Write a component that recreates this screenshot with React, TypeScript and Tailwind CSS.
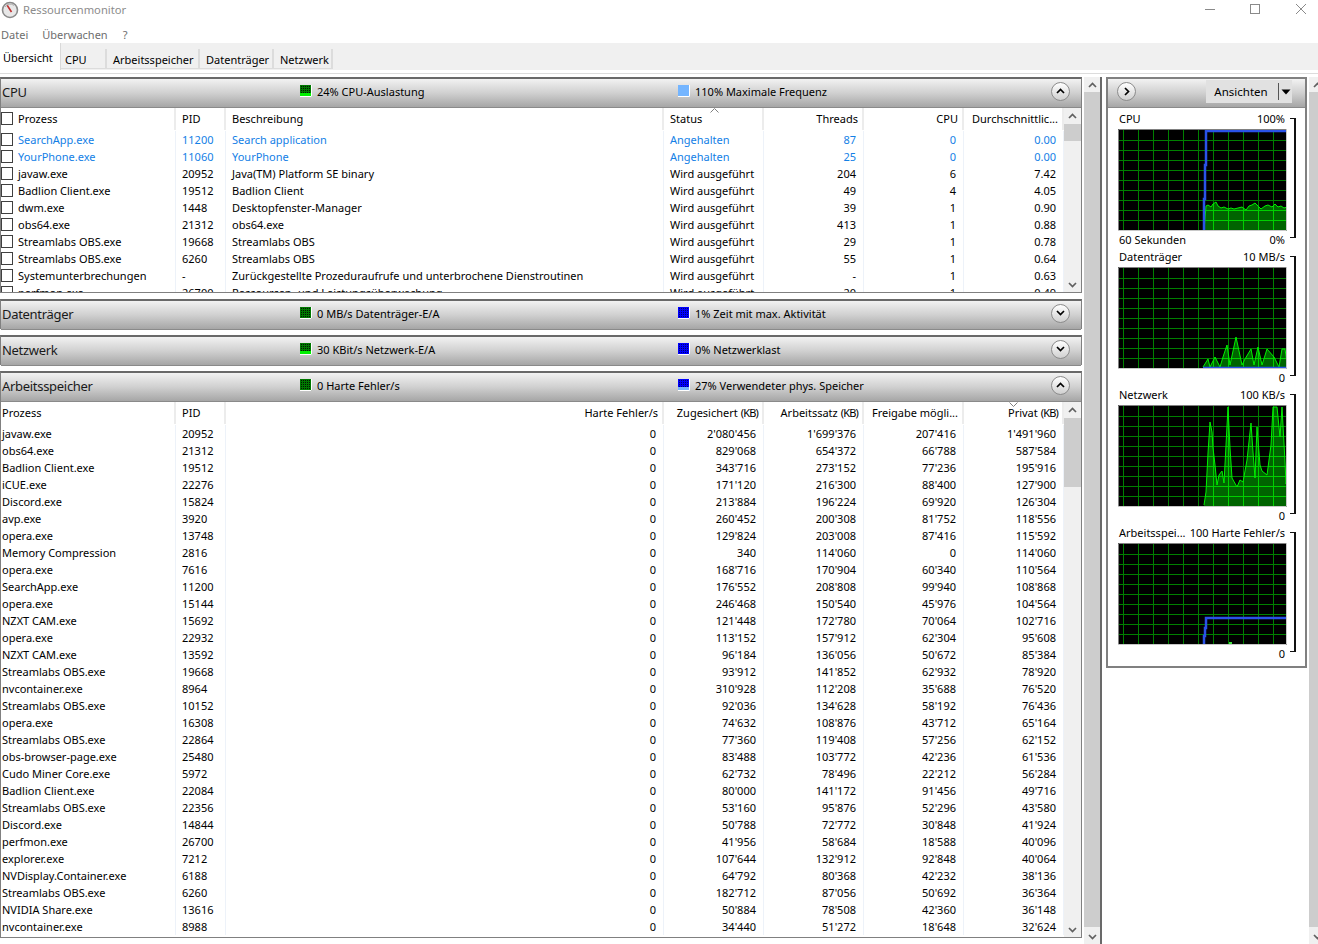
import { ReactNode } from "react";

type CpuRow = [string, string, string, string, string, string, string];

const cpuRows: CpuRow[] = [
  ["SearchApp.exe", "11200", "Search application", "Angehalten", "87", "0", "0.00"],
  ["YourPhone.exe", "11060", "YourPhone", "Angehalten", "25", "0", "0.00"],
  ["javaw.exe", "20952", "Java(TM) Platform SE binary", "Wird ausgeführt", "204", "6", "7.42"],
  ["Badlion Client.exe", "19512", "Badlion Client", "Wird ausgeführt", "49", "4", "4.05"],
  ["dwm.exe", "1448", "Desktopfenster-Manager", "Wird ausgeführt", "39", "1", "0.90"],
  ["obs64.exe", "21312", "obs64.exe", "Wird ausgeführt", "413", "1", "0.88"],
  ["Streamlabs OBS.exe", "19668", "Streamlabs OBS", "Wird ausgeführt", "29", "1", "0.78"],
  ["Streamlabs OBS.exe", "6260", "Streamlabs OBS", "Wird ausgeführt", "55", "1", "0.64"],
  ["Systemunterbrechungen", "-", "Zurückgestellte Prozeduraufrufe und unterbrochene Dienstroutinen", "Wird ausgeführt", "-", "1", "0.63"],
  ["perfmon.exe", "26700", "Ressourcen- und Leistungsüberwachung", "Wird ausgeführt", "20", "1", "0.49"],
];

const memRows: string[][] = [
  ["javaw.exe", "20952", "0", "2'080'456", "1'699'376", "207'416", "1'491'960"],
  ["obs64.exe", "21312", "0", "829'068", "654'372", "66'788", "587'584"],
  ["Badlion Client.exe", "19512", "0", "343'716", "273'152", "77'236", "195'916"],
  ["iCUE.exe", "22276", "0", "171'120", "216'300", "88'400", "127'900"],
  ["Discord.exe", "15824", "0", "213'884", "196'224", "69'920", "126'304"],
  ["avp.exe", "3920", "0", "260'452", "200'308", "81'752", "118'556"],
  ["opera.exe", "13748", "0", "129'824", "203'008", "87'416", "115'592"],
  ["Memory Compression", "2816", "0", "340", "114'060", "0", "114'060"],
  ["opera.exe", "7616", "0", "168'716", "170'904", "60'340", "110'564"],
  ["SearchApp.exe", "11200", "0", "176'552", "208'808", "99'940", "108'868"],
  ["opera.exe", "15144", "0", "246'468", "150'540", "45'976", "104'564"],
  ["NZXT CAM.exe", "15692", "0", "121'448", "172'780", "70'064", "102'716"],
  ["opera.exe", "22932", "0", "113'152", "157'912", "62'304", "95'608"],
  ["NZXT CAM.exe", "13592", "0", "96'184", "136'056", "50'672", "85'384"],
  ["Streamlabs OBS.exe", "19668", "0", "93'912", "141'852", "62'932", "78'920"],
  ["nvcontainer.exe", "8964", "0", "310'928", "112'208", "35'688", "76'520"],
  ["Streamlabs OBS.exe", "10152", "0", "92'036", "134'628", "58'192", "76'436"],
  ["opera.exe", "16308", "0", "74'632", "108'876", "43'712", "65'164"],
  ["Streamlabs OBS.exe", "22864", "0", "77'360", "119'408", "57'256", "62'152"],
  ["obs-browser-page.exe", "25480", "0", "83'488", "103'772", "42'236", "61'536"],
  ["Cudo Miner Core.exe", "5972", "0", "62'732", "78'496", "22'212", "56'284"],
  ["Badlion Client.exe", "22084", "0", "80'000", "141'172", "91'456", "49'716"],
  ["Streamlabs OBS.exe", "22356", "0", "53'160", "95'876", "52'296", "43'580"],
  ["Discord.exe", "14844", "0", "50'788", "72'772", "30'848", "41'924"],
  ["perfmon.exe", "26700", "0", "41'956", "58'684", "18'588", "40'096"],
  ["explorer.exe", "7212", "0", "107'644", "132'912", "92'848", "40'064"],
  ["NVDisplay.Container.exe", "6188", "0", "64'792", "80'368", "42'232", "38'136"],
  ["Streamlabs OBS.exe", "6260", "0", "182'712", "87'056", "50'692", "36'364"],
  ["NVIDIA Share.exe", "13616", "0", "50'884", "78'508", "42'360", "36'148"],
  ["nvcontainer.exe", "8988", "0", "34'440", "51'272", "18'648", "32'624"],
];

const cols = "grid grid-cols-[175px_50px_438px_100px_100px_100px_100px]";

function Chevron({ up, className }: { up: boolean; className?: string }) {
  return (
    <svg width="9" height="6" viewBox="0 0 9 6" className={className}>
      <path
        d={up ? "M1 5 L4.5 1.5 L8 5" : "M1 1 L4.5 4.5 L8 1"}
        fill="none"
        stroke="currentColor"
        strokeWidth="1.7"
      />
    </svg>
  );
}

function RoundBtn({ dir }: { dir: "up" | "down" | "right" }) {
  return (
    <div className="w-[19px] h-[19px] rounded-full border border-[#8c8c8c] bg-gradient-to-b from-[#ffffff] to-[#d0d0d0] flex items-center justify-center text-black">
      {dir === "right" ? (
        <svg width="6" height="9" viewBox="0 0 6 9">
          <path d="M1 1 L4.5 4.5 L1 8" fill="none" stroke="currentColor" strokeWidth="1.7" />
        </svg>
      ) : (
        <Chevron up={dir === "up"} />
      )}
    </div>
  );
}

function Scrollbar({ width, thumbTop, thumbH }: { width: string; thumbTop: string; thumbH: string }) {
  return (
    <div className={`${width} shrink-0 bg-[#f0f0f0] flex flex-col items-center text-[#606060]`}>
      <div className="h-[15px] flex items-center justify-center">
        <Chevron up />
      </div>
      <div className={`${thumbTop} ${thumbH} w-full bg-[#cdcdcd]`} />
      <div className="flex-1" />
      <div className="h-[15px] flex items-center justify-center">
        <Chevron up={false} />
      </div>
    </div>
  );
}

function Indicator({ base, dot, fillColor, fill }: { base: string; dot: string; fillColor: string; fill: number }) {
  const dots: ReactNode[] = [];
  for (let y = 1; y < 12; y += 2)
    for (let x = 1; x < 12; x += 2)
      dots.push(<rect key={`${x}-${y}`} x={x} y={y} width="1" height="1" fill={dot} />);
  return (
    <svg width="12" height="12" viewBox="0 0 12 12" className="shrink-0">
      <rect width="12" height="12" fill={base} />
      {dots}
      {fill > 0 && <rect x="0" y={12 - fill} width="12" height={fill} fill={fillColor} />}
      <path d="M0 11.5 H11.5 V0" fill="none" stroke="#ffffff" />
    </svg>
  );
}

const GreenInd = ({ fill }: { fill: number }) => <Indicator base="#007800" dot="#001800" fillColor="#00f000" fill={fill} />;
const BlueInd = ({ fill }: { fill: number }) => <Indicator base="#0000ff" dot="#000070" fillColor="#74b5ff" fill={fill} />;

function SectionHeader({
  title,
  left,
  right,
  open,
}: {
  title: string;
  left: [ReactNode, string];
  right: [ReactNode, string];
  open: boolean;
}) {
  return (
    <div className="h-[29px] shrink-0 flex items-center pb-[4px] bg-gradient-to-b from-[#f2f2f2] via-[#d0d0d0] to-[#a6a6a6] border-b border-[#8a8a8a]">
      <div className="w-[299px] pl-[1px] pt-[2px] text-[13px] text-[#1a1a1a] tracking-[-0.3px]">{title}</div>
      <div className="w-[378px] flex items-center gap-[5px]">
        {left[0]}
        <span>{left[1]}</span>
      </div>
      <div className="flex-1 flex items-center gap-[5px]">
        {right[0]}
        <span>{right[1]}</span>
      </div>
      <div className="mr-[11px]">
        <RoundBtn dir={open ? "up" : "down"} />
      </div>
    </div>
  );
}

function HeadCell({ children, right }: { children: ReactNode; right?: boolean }) {
  return (
    <div
      className={`h-full flex items-center pb-[1px] whitespace-nowrap overflow-hidden border-r-2 border-[#ececec] ${
        right ? "justify-end pr-[4px]" : "pl-[6px]"
      }`}
    >
      {children}
    </div>
  );
}

function Cell({ children, right }: { children: ReactNode; right?: boolean }) {
  return (
    <div
      className={`h-[17px] flex items-center px-[6px] whitespace-nowrap overflow-hidden border-r border-[#edf2f9] ${
        right ? "justify-end pr-[7px]" : ""
      }`}
    >
      {children}
    </div>
  );
}

function Box() {
  return <div className="w-[12px] h-[13px] border border-[#404040] bg-white shrink-0" />;
}

function Kb({ name }: { name: string }) {
  return (
    <span>
      {name} <span className="tracking-[-0.8px]">(KB)</span>
    </span>
  );
}

function CpuTable() {
  return (
    <div className="h-[184px] flex overflow-hidden bg-white">
      <div className="flex-1 overflow-hidden">
        <div className={`${cols} h-[22px] relative`}>
          <HeadCell>
            <div className="flex items-center gap-[5px] -ml-[6px]">
              <Box />
              Prozess
            </div>
          </HeadCell>
          <HeadCell>PID</HeadCell>
          <HeadCell>Beschreibung</HeadCell>
          <HeadCell>Status</HeadCell>
          <HeadCell right>Threads</HeadCell>
          <HeadCell right>CPU</HeadCell>
          <HeadCell right>Durchschnittlic...</HeadCell>
          <svg width="9" height="5" viewBox="0 0 9 5" className="absolute left-[709px] top-[0px] text-[#808080]">
            <path d="M0.5 4.5 L4.5 0.5 L8.5 4.5" fill="none" stroke="currentColor" />
          </svg>
        </div>
        <div className="pt-[1px]">
          {cpuRows.map((r, i) => (
            <div key={i} className={`${cols} ${i < 2 ? "text-[#1380e6]" : "text-black"}`}>
              <Cell>
                <div className="flex items-center gap-[5px] -ml-[6px]">
                  <Box />
                  {r[0]}
                </div>
              </Cell>
              <Cell>{r[1]}</Cell>
              <Cell>{r[2]}</Cell>
              <Cell>{r[3]}</Cell>
              <Cell right>{r[4]}</Cell>
              <Cell right>{r[5]}</Cell>
              <Cell right>{r[6]}</Cell>
            </div>
          ))}
        </div>
      </div>
      <Scrollbar width="w-[17px]" thumbTop="mt-[1px]" thumbH="h-[17px]" />
    </div>
  );
}

function MemTable() {
  return (
    <div className="flex-1 min-h-0 flex overflow-hidden bg-white">
      <div className="flex-1 overflow-hidden">
        <div className={`${cols} h-[22px] relative`}>
          <HeadCell>
            <span className="-ml-[5px]">Prozess</span>
          </HeadCell>
          <HeadCell>PID</HeadCell>
          <HeadCell right>Harte Fehler/s</HeadCell>
          <HeadCell right>
            <Kb name="Zugesichert" />
          </HeadCell>
          <HeadCell right>
            <Kb name="Arbeitssatz" />
          </HeadCell>
          <HeadCell right>Freigabe mögli...</HeadCell>
          <HeadCell right>
            <Kb name="Privat" />
          </HeadCell>
          <svg width="9" height="5" viewBox="0 0 9 5" className="absolute left-[1008px] top-[0px] text-[#808080]">
            <path d="M0.5 0.5 L4.5 4.5 L8.5 0.5" fill="none" stroke="currentColor" />
          </svg>
        </div>
        <div className="pt-[1px]">
          {memRows.map((r, i) => (
            <div key={i} className={`${cols} text-black`}>
              <Cell>
                <span className="-ml-[5px]">{r[0]}</span>
              </Cell>
              <Cell>{r[1]}</Cell>
              <Cell right>{r[2]}</Cell>
              <Cell right>{r[3]}</Cell>
              <Cell right>{r[4]}</Cell>
              <Cell right>{r[5]}</Cell>
              <Cell right>{r[6]}</Cell>
            </div>
          ))}
        </div>
      </div>
      <Scrollbar width="w-[17px]" thumbTop="mt-[1px]" thumbH="h-[69px]" />
    </div>
  );
}

// graph coordinates are 169x102, same as the box on screen
function Graph({ line, blue, id, dot }: { line?: [number, number][]; blue?: string; id: string; dot?: boolean }) {
  const vs = Array.from({ length: 12 }, (_, i) => 5 + i * 15);
  const hs = Array.from({ length: 9 }, (_, i) => 11 + i * 10);
  const pts = line ? line.map((p) => p.join(",")).join(" ") : "";
  const area = line ? `${line[0][0]},102 ${pts} ${line[line.length - 1][0]},102` : "";
  const gridLines = (stroke: string) => (
    <>
      {vs.map((x) => (
        <line key={`v${x}`} x1={x + 0.5} x2={x + 0.5} y1="0" y2="102" stroke={stroke} />
      ))}
      {hs.map((y) => (
        <line key={`h${y}`} y1={y + 0.5} y2={y + 0.5} x1="0" x2="169" stroke={stroke} />
      ))}
    </>
  );
  return (
    <svg width="169" height="102" viewBox="0 0 169 102" className="block shrink-0">
      <rect width="169" height="102" fill="#000" />
      {gridLines("#008000")}
      {line && (
        <>
          <clipPath id={id}>
            <polygon points={area} />
          </clipPath>
          <polygon points={area} fill="#006400" />
          <g clipPath={`url(#${id})`}>{gridLines("#00d000")}</g>
          <polyline points={pts} fill="none" stroke="#00f000" strokeWidth="1" />
        </>
      )}
      {dot && <rect x="111" y="99" width="3" height="2" fill="#40e040" />}
      {blue && <polyline points={blue} fill="none" stroke="#2a52e8" strokeWidth="2.5" />}
      <path d="M0.5 102 V0.5 H169" fill="none" stroke="#808080" />
      <path d="M0 101.5 H168.5 V0" fill="none" stroke="#c8c8c8" />
    </svg>
  );
}

const cpuLine: [number, number][] = [
  [86, 102], [88, 77], [90, 76], [93, 78], [95, 75], [98, 73], [100, 77], [103, 79], [106, 78], [110, 80], [113, 79],
  [116, 80], [120, 79], [124, 78], [128, 81], [131, 77], [134, 76], [137, 74], [140, 77], [143, 80], [147, 77], [150, 76],
  [154, 78], [157, 75], [160, 78], [163, 77], [166, 79], [169, 78],
];
const diskLine: [number, number][] = [
  [85, 100], [90, 92], [92, 100], [97, 90], [102, 100], [105, 90], [109, 78], [112, 98], [118, 70], [124, 98], [127, 92],
  [133, 82], [136, 98], [140, 80], [144, 98], [149, 82], [156, 90], [161, 100], [164, 82], [167, 82], [169, 96],
];
const netLine: [number, number][] = [
  [86, 100], [88, 87], [90, 48], [92, 17], [94, 27], [95, 43], [97, 60], [99, 80], [101, 70], [104, 66], [106, 78], [108, 40],
  [110, 2], [112, 43], [114, 73], [119, 82], [122, 75], [125, 77], [129, 55], [133, 18], [135, 47], [137, 73], [139, 22],
  [142, 60], [144, 66], [149, 70], [153, 40], [155, 2], [159, 2], [162, 32], [164, 2], [167, 57], [168, 79], [169, 73],
];

function GraphBlock({
  label,
  top,
  foot,
  footRight,
  children,
}: {
  label: string;
  top: string;
  foot?: string;
  footRight: string;
  children: ReactNode;
}) {
  return (
    <div className="h-[138px] flex">
      <div className="w-[169px] flex flex-col">
        <div className="h-[20px] flex items-center justify-between pl-[1px] pr-[2px] pb-[2px] whitespace-nowrap">
          <span>{label}</span>
          <span>{top}</span>
        </div>
        {children}
        <div className="h-[16px] flex items-center justify-between pl-[1px] pr-[2px]">
          <span>{foot}</span>
          <span>{footRight}</span>
        </div>
      </div>
      <div className="w-[6px] ml-[3px] my-[9px] border-y border-r-2 border-[#111]" />
    </div>
  );
}

export default function App() {
  return (
    <div className="w-[1318px] h-[944px] overflow-hidden bg-white flex flex-col font-['Noto_Sans',sans-serif] text-[11px] leading-none text-black">
      <div className="h-[26px] shrink-0 flex items-center pb-[6px] text-[11.2px] text-[#8c8c8c]">
        <svg width="18" height="18" viewBox="0 0 18 18" className="ml-[1px] mr-[4px]">
          <circle cx="9" cy="9" r="7.5" fill="#e8e8e8" stroke="#8a8a8a" strokeWidth="1.6" />
          <path d="M6 4 L10.5 11" stroke="#c03030" strokeWidth="1.6" />
          <path d="M4 6 A6 6 0 0 1 13 4.5" fill="none" stroke="#b0b0b0" />
        </svg>
        <span>Ressourcenmonitor</span>
        <div className="flex-1" />
        <svg width="113" height="14" viewBox="0 0 113 14" className="text-[#8a8a8a]">
          <line x1="0" x2="10" y1="6.5" y2="6.5" stroke="currentColor" />
          <rect x="45.5" y="1.5" width="9" height="9" fill="none" stroke="currentColor" />
          <path d="M91 1 L101 11 M101 1 L91 11" stroke="currentColor" fill="none" />
        </svg>
      </div>
      <div className="h-[17px] shrink-0 flex items-center gap-[14px] pl-[1px] text-[#6e6e6e]">
        <span>Datei</span>
        <span>Überwachen</span>
        <span className="ml-[1px]">?</span>
      </div>
      <div className="h-[27px] shrink-0 bg-[#f0f0f0] flex items-end pb-[1px]">
        <div className="w-[61px] h-[27px] -mb-[1px] bg-white border-r border-[#d9d9d9] pl-[3px] pt-[2px] flex items-center">Übersicht</div>
        <div className="w-[46px] h-[20px] border-r-2 border-b border-[#dcdcdc] pl-[4px] pt-[1px] flex items-center">CPU</div>
        <div className="w-[93px] h-[20px] border-r-2 border-b border-[#dcdcdc] pl-[6px] pt-[1px] flex items-center">Arbeitsspeicher</div>
        <div className="w-[74px] h-[20px] border-r-2 border-b border-[#dcdcdc] pl-[6px] pt-[1px] flex items-center">Datenträger</div>
        <div className="w-[59px] h-[20px] border-r-2 border-b border-[#dcdcdc] pl-[6px] pt-[1px] flex items-center">Netzwerk</div>
      </div>
      <div className="h-[7px] shrink-0 pt-[3px]">
        <div className="h-[1px] bg-[#dcdcdc]" />
      </div>

      <div className="flex-1 min-h-0 flex">
        <div className="w-[1082px] shrink-0 flex flex-col gap-[6px] pb-[6px]">
          <div className="h-[216px] flex flex-col border-x border-b border-t-2 border-x-[#808080] border-b-[#808080] border-t-[#696969]">
            <SectionHeader
              title="CPU"
              left={[<GreenInd fill={4} />, "24% CPU-Auslastung"]}
              right={[<Indicator base="#74b5ff" dot="#74b5ff" fillColor="#74b5ff" fill={0} />, "110% Maximale Frequenz"]}
              open
            />
            <CpuTable />
          </div>
          <div className="h-[30px] flex flex-col border-x border-t-2 border-x-[#808080] border-t-[#696969]">
            <SectionHeader
              title="Datenträger"
              left={[<GreenInd fill={0} />, "0 MB/s Datenträger-E/A"]}
              right={[<BlueInd fill={0} />, "1% Zeit mit max. Aktivität"]}
              open={false}
            />
          </div>
          <div className="h-[30px] flex flex-col border-x border-t-2 border-x-[#808080] border-t-[#696969]">
            <SectionHeader
              title="Netzwerk"
              left={[<GreenInd fill={4} />, "30 KBit/s Netzwerk-E/A"]}
              right={[<BlueInd fill={0} />, "0% Netzwerklast"]}
              open={false}
            />
          </div>
          <div className="flex-1 min-h-0 flex flex-col border-x border-b border-t-2 border-x-[#808080] border-b-[#808080] border-t-[#696969]">
            <SectionHeader
              title="Arbeitsspeicher"
              left={[<GreenInd fill={0} />, "0 Harte Fehler/s"]}
              right={[<BlueInd fill={4} />, "27% Verwendeter phys. Speicher"]}
              open
            />
            <MemTable />
          </div>
        </div>

        <div className="ml-[2px] flex">
          <Scrollbar width="w-[16px]" thumbTop="" thumbH="h-[835px]" />
        </div>
        <div className="w-[2px] bg-[#696969] shrink-0" />

        <div className="ml-[4px] w-[201px] shrink-0 h-[591px] border-x-2 border-b-2 border-t-2 border-[#808080] flex flex-col">
          <div className="h-[29px] shrink-0 flex items-center bg-gradient-to-b from-[#f2f2f2] via-[#d0d0d0] to-[#a6a6a6] border-b border-[#8a8a8a] pl-[9px] pb-[3px]">
            <RoundBtn dir="right" />
            <div className="ml-[70px] w-[86px] h-[23px] bg-[#e1e1e1] flex items-center text-[11.5px]">
              <span className="w-[70px] text-center">Ansichten</span>
              <div className="w-[1px] h-[17px] ml-[2px] bg-[#555]" />
              <svg width="10" height="6" viewBox="0 0 10 6" className="ml-[2px]">
                <path d="M0.5 0.5 H9.5 L5 5.5 Z" fill="#000" />
              </svg>
            </div>
          </div>
          <div className="pl-[10px] pt-[1px]">
            <GraphBlock label="CPU" top="100%" foot="60 Sekunden" footRight="0%">
              <Graph id="g1" line={cpuLine} blue="86,102 86,70 87,70 87,36 88,36 88,2 169,2" />
            </GraphBlock>
            <GraphBlock label="Datenträger" top="10 MB/s" footRight="0">
              <Graph id="g2" line={diskLine} blue="85,101 169,101" />
            </GraphBlock>
            <GraphBlock label="Netzwerk" top="100 KB/s" footRight="0">
              <Graph id="g3" line={netLine} />
            </GraphBlock>
            <GraphBlock label="Arbeitsspei..." top="100 Harte Fehler/s" footRight="0">
              <Graph id="g4" dot blue="86,102 86,93 87,93 87,85 88,85 88,75 169,75" />
            </GraphBlock>
          </div>
        </div>

        <div className="ml-[2px] flex">
          <Scrollbar width="w-[16px]" thumbTop="" thumbH="h-[835px]" />
        </div>
      </div>
    </div>
  );
}
